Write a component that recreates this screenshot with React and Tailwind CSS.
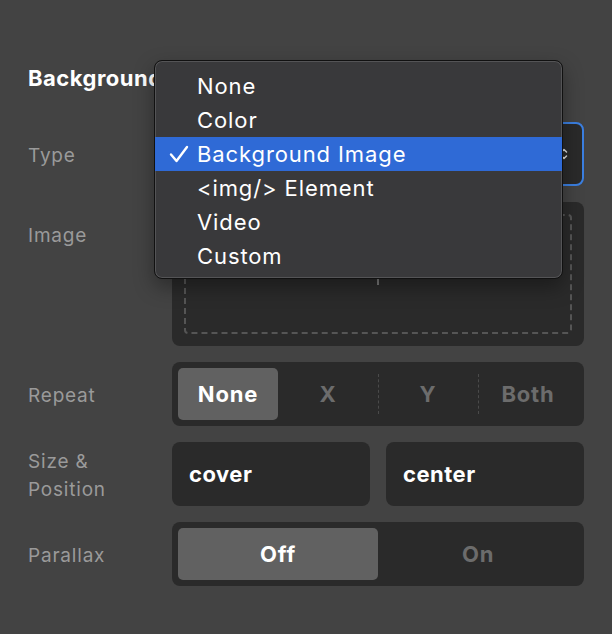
import React from "react";

const font = { fontFamily: "Inter, 'Noto Sans', sans-serif" };

const typeOptions = ["None", "Color", "Background Image", "<img/> Element", "Video", "Custom"];

const Label = ({ children }) => (
  <div className="w-[144px] shrink-0 min-h-[64px] flex items-center pt-[4px] text-[19px] leading-[28px] tracking-[0.8px] text-[#9a9a9a]">
    {children}
  </div>
);

const Check = () => (
  <svg width="20" height="18" viewBox="0 0 20 18" fill="none" className="shrink-0">
    <path d="M2 9.5 L7.5 16 L18 2" stroke="white" strokeWidth="2.4" strokeLinecap="round" strokeLinejoin="round" />
  </svg>
);

const TypeMenu = ({ selected }) => (
  <div className="absolute left-[-18px] top-[-62px] z-10 w-[409px] rounded-[8px] border border-[#111] bg-[#39393b] pt-[8px] pb-[5px] shadow-[inset_0_0_0_1px_rgba(255,255,255,0.14),0_8px_20px_rgba(0,0,0,0.35)]">
    {typeOptions.map((opt) => (
      <div
        key={opt}
        className={`flex h-[34px] items-center text-[22px] tracking-[0.9px] text-white ${
          opt === selected ? "bg-[#2f6ad6]" : ""
        }`}
      >
        <div className="flex w-[42px] justify-end pr-[8px]">{opt === selected && <Check />}</div>
        <span>{opt}</span>
      </div>
    ))}
  </div>
);

const Segmented = ({ options, value, dashed }) => (
  <div className="flex h-[64px] flex-1 rounded-[8px] bg-[#2a2a2a] p-[6px]">
    {options.map((opt, i) => {
      const active = opt === value;
      const prevActive = i > 0 && options[i - 1] === value;
      return (
        <div key={opt} className="relative flex flex-1 items-center justify-center">
          {dashed && i > 0 && !active && !prevActive && (
            <div className="absolute left-0 top-[6px] bottom-[6px] border-l border-dashed border-[#4a4a4a]" />
          )}
          <div
            className={`flex h-full w-full items-center justify-center rounded-[5px] text-[22px] font-bold tracking-[0.8px] ${
              active ? "bg-[#616161] text-white" : "text-[#6c6c6c]"
            }`}
          >
            {opt}
          </div>
        </div>
      );
    })}
  </div>
);

const ValueBox = ({ children }) => (
  <div className="flex h-[64px] flex-1 items-center rounded-[8px] bg-[#2a2a2a] px-[17px] text-[22px] font-bold tracking-[0.5px] text-white">
    {children}
  </div>
);

export default function App() {
  return (
    <div className="min-h-screen bg-[#434343] px-[28px] pb-[48px] pt-[64px]" style={font}>
      <h2 className="mb-[30px] text-[22px] font-bold leading-[28px] tracking-[0.5px] text-white">Background</h2>

      <div className="flex flex-col gap-[16px]">
        {/* Type */}
        <div className="flex items-start">
          <Label>Type</Label>
          <div className="relative flex-1">
            <div className="flex h-[64px] items-center justify-between rounded-[8px] border-2 border-[#3b7fe0] bg-[#2a2a2a] pl-[16px] pr-[14px] text-[22px] font-bold text-white">
              <span>Background Image</span>
              <svg width="8" height="16" viewBox="0 0 8 16" fill="none">
                <path d="M1.5 6 L4 3.5 L6.5 6 M1.5 10 L4 12.5 L6.5 10" stroke="#ddd" strokeWidth="1.5" strokeLinecap="round" strokeLinejoin="round" />
              </svg>
            </div>
            <TypeMenu selected="Background Image" />
          </div>
        </div>

        {/* Image drop zone */}
        <div className="flex items-start">
          <Label>Image</Label>
          <div className="h-[144px] flex-1 rounded-[8px] bg-[#2a2a2a] p-[12px]">
            <div className="flex h-full items-center justify-center rounded-[4px] border-2 border-dashed border-[#555]">
              <svg width="24" height="24" viewBox="0 0 24 24" fill="none">
                <path d="M12 1 V23 M1 12 H23" stroke="#777" strokeWidth="2" />
              </svg>
            </div>
          </div>
        </div>

        {/* Repeat */}
        <div className="flex items-start">
          <Label>Repeat</Label>
          <Segmented options={["None", "X", "Y", "Both"]} value="None" dashed />
        </div>

        {/* Size & Position */}
        <div className="flex items-start">
          <Label>
            Size &amp;
            <br />
            Position
          </Label>
          <div className="flex flex-1 gap-[16px]">
            <ValueBox>cover</ValueBox>
            <ValueBox>center</ValueBox>
          </div>
        </div>

        {/* Parallax */}
        <div className="flex items-start">
          <Label>Parallax</Label>
          <Segmented options={["Off", "On"]} value="Off" />
        </div>
      </div>
    </div>
  );
}
